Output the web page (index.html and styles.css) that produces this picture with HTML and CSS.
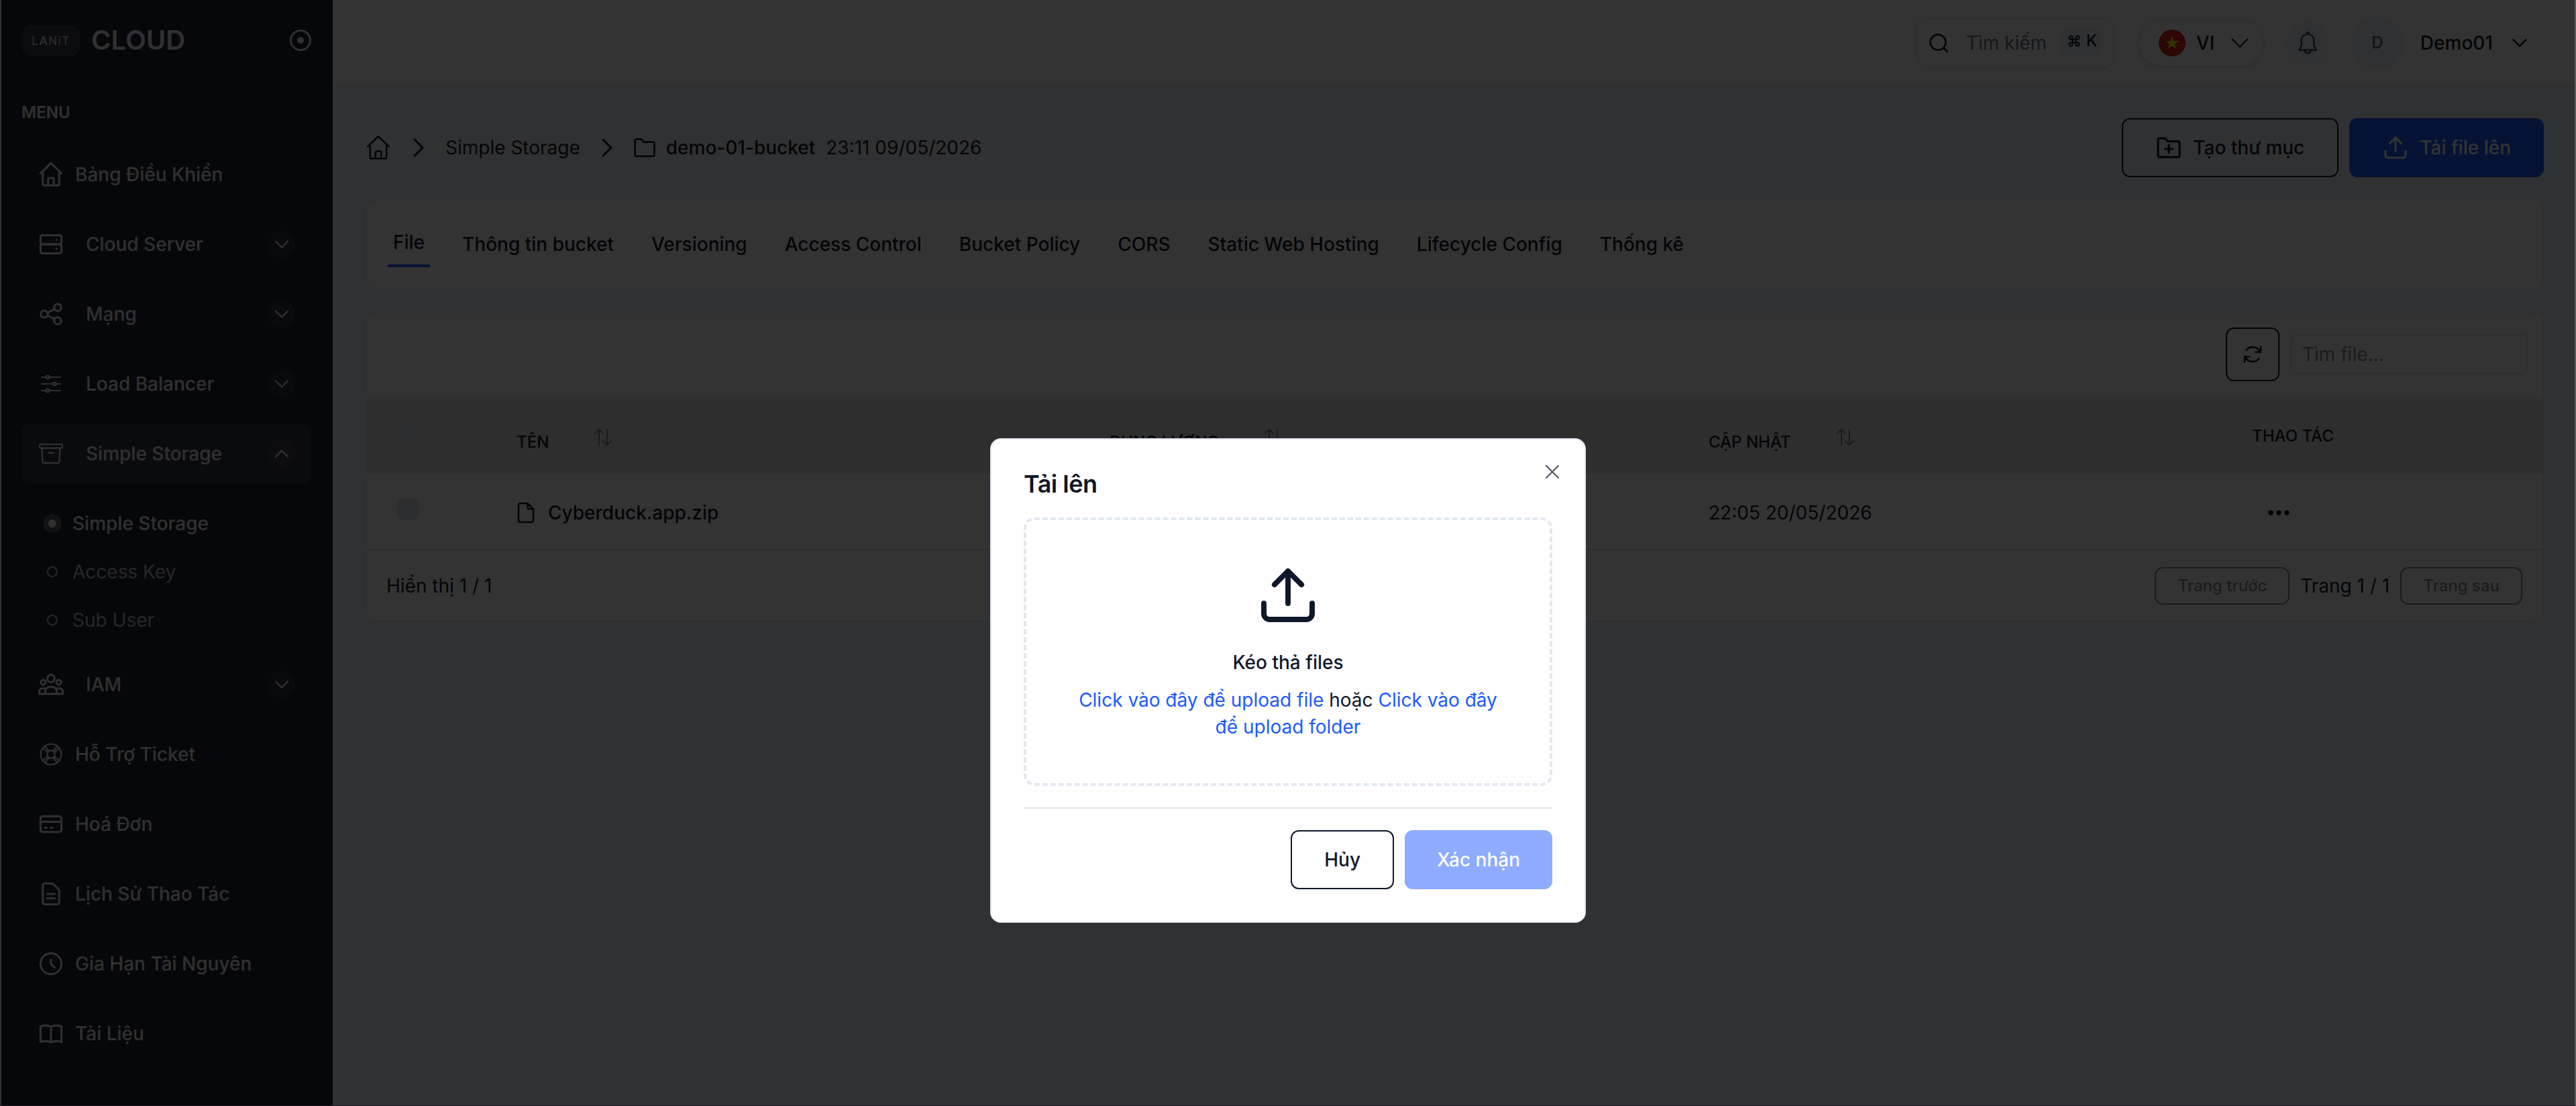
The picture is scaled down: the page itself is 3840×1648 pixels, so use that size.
FILE: index.html
```
<!DOCTYPE html>
<html lang="vi">
<head>
    <meta charset="UTF-8">
    <meta name="viewport" content="width=device-width, initial-scale=1.0">
    <title>Simple Storage</title>
    <link rel="stylesheet" href="styles.css">
</head>
<body>
    <svg class="sprite">
        <symbol id="home" viewBox="0 0 20 20"><path d="M2.1 9.2 10 1.6l7.9 7.6M3.9 8v9.2c0 .5.4.9.9.9h10.4c.5 0 .9-.4.9-.9V8M7.9 18v-4.400c0-.6.4-1 1-1h2.200c.6 0 1 .4 1 1V18"/></symbol>
        <symbol id="chevron" viewBox="0 0 20 20"><path d="m4 7 6 6 6-6"/></symbol>
        <symbol id="folder" viewBox="0 0 20 20"><path d="M2 16V4.200C2 3.500 2.500 3 3.200 3h3.600c.5 0 .9.200 1.100.6L9 5.300h7.800c.700 0 1.200.5 1.200 1.200V16c0 .6-.5 1.100-1.200 1.100H3.200C2.500 17.100 2 16.600 2 16z"/></symbol>
        <symbol id="upload" viewBox="0 0 20 20"><path d="M2.500 12.500v3.300c0 .9.800 1.700 1.700 1.700h11.600c.9 0 1.700-.8 1.700-1.700v-3.300M10 12.500v-10M5.800 6.700 10 2.500l4.200 4.200"/></symbol>
        <symbol id="sort" viewBox="0 0 28 28"><path d="M8 26V3M2 9l6-6 6 6M20 3v23M14 20l6 6 6-6"/></symbol>
    </svg>

    <div class="app">
        <aside class="sidebar">
            <div class="brand">
                <div class="brand-logo">L<span class="logo-a">A</span>NiT</div>
                <div class="brand-name">CLOUD</div>
                <svg class="brand-toggle" viewBox="0 0 32 32"><circle cx="16" cy="16" r="14.500"/><circle class="dot" cx="16" cy="16" r="5"/></svg>
            </div>
            <h3 class="menu-title">MENU</h3>
            <nav class="menu">
                <a class="item"><svg class="icon"><use href="#home"/></svg><span>Bảng Điều Khiển</span></a>
                <a class="item parent">
                    <svg class="icon" viewBox="0 0 20 20"><rect x="2.200" y="3.200" width="15.600" height="6.800" rx="1.500"/><rect x="2.200" y="10" width="15.600" height="6.800" rx="1.500"/><path d="M14 6.600h.1M14 13.400h.1"/></svg>
                    <span>Cloud Server</span><i class="toggle"><svg><use href="#chevron"/></svg></i>
                </a>
                <a class="item parent">
                    <svg class="icon" viewBox="0 0 20 20"><circle cx="5" cy="10" r="2.600"/><circle cx="15" cy="5" r="2.600"/><circle cx="15" cy="15" r="2.600"/><path d="m7.400 9 5.200-2.700M7.400 11l5.200 2.700"/></svg>
                    <span>Mạng</span><i class="toggle"><svg><use href="#chevron"/></svg></i>
                </a>
                <a class="item parent">
                    <svg class="icon thin" viewBox="0 0 20 20"><path d="M3 5h3.700M8.700 5H17M3 10h8.700M13.700 10H17M3 15h3.700M8.700 15H17"/><circle cx="7.600" cy="5" r="1.200"/><circle cx="12.600" cy="10" r="1.200"/><circle cx="7.600" cy="15" r="1.200"/></svg>
                    <span>Load Balancer</span><i class="toggle"><svg><use href="#chevron"/></svg></i>
                </a>
                <a class="item parent active">
                    <svg class="icon thin" viewBox="0 0 20 20"><rect x="1.600" y="3" width="16.800" height="2.800" rx=".6"/><path d="M3.300 5.900 3.700 15.600c0 .8.700 1.300 1.400 1.300h9.800c.7 0 1.400-.5 1.400-1.300l.4-9.700M8.200 9.400h3.600"/></svg>
                    <span>Simple Storage</span><i class="toggle up"><svg><use href="#chevron"/></svg></i>
                </a>
                <div class="submenu">
                    <a class="sub current"><i></i>Simple Storage</a>
                    <a class="sub"><i></i>Access Key</a>
                    <a class="sub"><i></i>Sub User</a>
                </div>
                <a class="item parent">
                    <svg class="icon" viewBox="0 0 20 20"><circle cx="10" cy="5.500" r="2.700"/><circle cx="4.200" cy="8.300" r="1.800"/><circle cx="15.800" cy="8.300" r="1.800"/><path d="M5.700 17v-2c0-2 1.800-3.400 4.300-3.400s4.300 1.400 4.300 3.400v2M1.300 17v-2c0-1.300 1.200-2.200 2.900-2.200.8 0 1.500.2 2 .5M18.700 17v-2c0-1.300-1.200-2.200-2.900-2.200-.8 0-1.500.2-2 .5M1.300 17h17.400"/></svg>
                    <span>IAM</span><i class="toggle"><svg><use href="#chevron"/></svg></i>
                </a>
                <a class="item">
                    <svg class="icon thin" viewBox="0 0 20 20"><circle cx="10" cy="10" r="7.700"/><circle cx="10" cy="10" r="2.900"/><path d="m3.900 5.500 3.600 2.800M5.500 3.900l2.800 3.600M16.100 5.500l-3.600 2.800M14.500 3.900l-2.800 3.600M3.900 14.500l3.600-2.800M5.500 16.100l2.800-3.600M16.100 14.500l-3.600-2.800M14.500 16.100l-2.800-3.600"/></svg>
                    <span>Hỗ Trợ Ticket</span>
                </a>
                <a class="item">
                    <svg class="icon" viewBox="0 0 20 20"><rect x="2.200" y="4.100" width="15.600" height="11.800" rx="1.800"/><path d="M2.200 8.200h15.600M5.700 12.600h1.100M9.700 12.600h1.200"/></svg>
                    <span>Hoá Đơn</span>
                </a>
                <a class="item">
                    <svg class="icon" viewBox="0 0 20 20"><path d="M16.100 7v9.300c0 .9-.7 1.500-1.500 1.500H5.400c-.8 0-1.500-.6-1.500-1.500V3.700c0-.9.700-1.500 1.500-1.500h5.800zM7.200 10h5.600M7.200 13.200h5.600"/></svg>
                    <span>Lịch Sử Thao Tác</span>
                </a>
                <a class="item">
                    <svg class="icon" viewBox="0 0 20 20"><circle cx="10" cy="10" r="7.800"/><path d="M10 7v3.200l2.700 2.600"/></svg>
                    <span>Gia Hạn Tài Nguyên</span>
                </a>
                <a class="item">
                    <svg class="icon" viewBox="0 0 20 20"><path d="M10 5c-2-1.100-5.300-1.100-7.800-.3v11.600c2.500-.8 5.800-.8 7.800.3 2-1.100 5.300-1.100 7.800-.3V4.700C15.300 3.900 12 3.900 10 5v11.400"/></svg>
                    <span>Tài Liệu</span>
                </a>
            </nav>
        </aside>

        <div class="page">
            <header class="topbar">
                <div class="search">
                    <svg viewBox="0 0 32 32"><circle cx="15" cy="15" r="11.500"/><path d="m23.500 23.500 5.500 5.500"/></svg>
                    <span>Tìm kiếm</span>
                    <kbd><svg class="cmd" viewBox="0 0 24 24"><path d="M9 9h6v6H9zM9 9H6a3 3 0 1 1 3-3zM15 9V6a3 3 0 1 1 3 3zM15 15h3a3 3 0 1 1-3 3zM9 15v3a3 3 0 1 1-3-3z"/></svg>K</kbd>
                </div>
                <div class="lang">
                    <svg class="flag" viewBox="0 0 40 40"><circle cx="20" cy="20" r="20" fill="#da251d"/><path fill="#ff0" d="m20 9.500 2.400 7.400h7.700l-6.300 4.500 2.400 7.400-6.200-4.600-6.200 4.600 2.400-7.400-6.300-4.500h7.700z"/></svg>
                    <span>VI</span>
                    <svg class="caret"><use href="#chevron"/></svg>
                </div>
                <div class="bell">
                    <svg viewBox="0 0 36 36"><path d="M18 2.200c.9 0 1.500.7 1.500 1.600v1.100c4.600.7 7.700 4.400 7.700 8.900v8.400l3.300 5.200c.3.500 0 1.100-.6 1.100H6.100c-.6 0-.9-.6-.6-1.100l3.300-5.200v-8.400c0-4.500 3.100-8.200 7.700-8.900V3.800c0-.9.600-1.600 1.500-1.600zM13.500 28.700c.3 2.800 2 4.600 4.500 4.600s4.200-1.800 4.500-4.600"/></svg>
                </div>
                <div class="avatar">D</div>
                <div class="user">Demo01</div>
                <svg class="user-caret"><use href="#chevron"/></svg>
            </header>

            <main class="content">
                <div class="heading">
                    <div class="breadcrumb">
                        <svg class="crumb-home"><use href="#home"/></svg>
                        <svg class="sep"><use href="#chevron"/></svg>
                        <span>Simple Storage</span>
                        <svg class="sep"><use href="#chevron"/></svg>
                        <svg class="crumb-folder"><use href="#folder"/></svg>
                        <b>demo-01-bucket</b>
                        <span>23:11 09/05/2026</span>
                    </div>
                    <div class="actions">
                        <button class="btn outline"><svg viewBox="0 0 20 20"><use href="#folder"/><path d="M10 8.200v5.600M7.200 11h5.600"/></svg>Tạo thư mục</button>
                        <button class="btn primary"><svg><use href="#upload"/></svg>Tải file lên</button>
                    </div>
                </div>

                <div class="tabs">
                    <a class="tab selected">File</a>
                    <a class="tab">Thông tin bucket</a>
                    <a class="tab">Versioning</a>
                    <a class="tab">Access Control</a>
                    <a class="tab">Bucket Policy</a>
                    <a class="tab">CORS</a>
                    <a class="tab">Static Web Hosting</a>
                    <a class="tab">Lifecycle Config</a>
                    <a class="tab">Thống kê</a>
                </div>

                <section class="card">
                    <div class="toolbar">
                        <button class="refresh"><svg viewBox="0 0 28 28"><path d="M25.500 11.500A12 12 0 0 0 4.500 8M2.500 16.500a12 12 0 0 0 21 3.500M26 2.500v8h-7.500M2 25.500v-8h7.500"/></svg></button>
                        <input class="filter" type="text" placeholder="Tìm file...">
                    </div>
                    <div class="row head">
                        <i class="check"></i>
                        <div class="cell">TÊN<svg class="sort"><use href="#sort"/></svg></div>
                        <div class="cell">DUNG LƯỢNG<svg class="sort"><use href="#sort"/></svg></div>
                        <div class="cell">CẬP NHẬT<svg class="sort"><use href="#sort"/></svg></div>
                        <div class="cell ops">THAO TÁC</div>
                    </div>
                    <div class="row">
                        <i class="check"></i>
                        <div class="cell name"><svg viewBox="0 0 28 32"><path d="M16.500 2H5.200C4 2 3 3 3 4.200v23.600C3 29 4 30 5.200 30h17.600c1.200 0 2.200-1 2.200-2.200V10.500zM16.500 2v6.300c0 1.200 1 2.200 2.200 2.200H25"/></svg>Cyberduck.app.zip</div>
                        <div class="cell"></div>
                        <div class="cell">22:05 20/05/2026</div>
                        <div class="cell dots"><svg viewBox="0 0 32 8"><circle cx="4" cy="4" r="3.700"/><circle cx="16" cy="4" r="3.700"/><circle cx="28" cy="4" r="3.700"/></svg></div>
                    </div>
                    <div class="pager">
                        <span class="total">Hiển thị 1 / 1</span>
                        <button disabled>Trang trước</button>
                        <span>Trang 1 / 1</span>
                        <button disabled>Trang sau</button>
                    </div>
                </section>
            </main>
        </div>
    </div>

    <div class="overlay">
        <div class="modal">
            <svg class="close" viewBox="0 0 20 20"><path d="m1 1 18 18M19 1 1 19"/></svg>
            <h2>Tải lên</h2>
            <div class="dropzone">
                <svg><use href="#upload"/></svg>
                <p class="drop-title">Kéo thả files</p>
                <p class="drop-text"><a>Click vào đây để upload file</a> hoặc <a>Click vào đây</a><br><a>để upload folder</a></p>
            </div>
            <div class="modal-footer">
                <button class="btn outline">Hủy</button>
                <button class="btn primary" disabled>Xác nhận</button>
            </div>
        </div>
    </div>
</body>
</html>
```
FILE: styles.css
```
* { box-sizing: border-box; margin: 0; padding: 0; }
body { width: 3840px; height: 1648px; overflow: hidden; font-family: Inter, sans-serif; font-size: 28px; line-height: 40px; color: #0f172a; background: #f1f5f9; }
svg { fill: none; stroke: currentColor; stroke-width: 1.5; stroke-linecap: round; stroke-linejoin: round; flex: none; }
button, input { font: inherit; color: inherit; background: none; }
i { font-style: normal; }
.sprite { display: none; }
.app { display: flex; width: 3838px; height: 1648px; border-left: 2px solid #fff; }

/* sidebar */
.sidebar { width: 494px; flex: none; padding: 37px 32px 0 30px; background: #1c2434; color: #f1f1f1; }
.brand { display: flex; align-items: center; height: 47px; }
.brand-logo { width: 88px; height: 47px; line-height: 48px; text-align: center; border-radius: 16px; background: #373f49; font-size: 17px; letter-spacing: 1.5px; color: #ddd; box-shadow: 0 4px 8px rgba(0, 0, 0, .4); }
.logo-a { font-weight: 600; }
.brand-name { margin-left: 16px; padding-bottom: 2px; font-size: 40px; font-weight: 600; }
.brand-toggle { width: 32px; height: 32px; margin: 0 0 1px auto; stroke-width: 3; }
.brand-toggle .dot { fill: currentColor; stroke: none; }
.menu-title { margin: 64px 0 28px; font-size: 24px; font-weight: 600; }
.menu { display: flex; flex-direction: column; gap: 16px; }
.item { display: flex; align-items: center; gap: 16px; height: 88px; padding: 0 24px; border-radius: 12px; font-weight: 500; }
.item.parent { gap: 32px; }
.item.active { background: #333a48; }
.icon { width: 40px; height: 40px; }
.icon.thin { stroke-width: 1.1; }
.toggle { display: flex; align-items: center; justify-content: center; width: 40px; height: 40px; margin-left: auto; border-radius: 50%; background: #2e3543; }
.item.active .toggle { background: #40444f; }
.toggle svg { width: 30px; height: 30px; }
.toggle.up svg { transform: rotate(180deg); }
.submenu { padding-top: 8px; }
.sub { display: flex; align-items: center; height: 72px; padding-left: 32px; gap: 16px; color: #c0c4ca; }
.sub i { width: 16px; height: 16px; margin: 0 6px; border: 2px solid #c0c4ca; border-radius: 50%; }
.sub.current { color: #f1f1f1; font-weight: 500; }
.sub.current i { width: 28px; height: 28px; margin: 0; border: 8px solid #555a64; background: #f1f1f1; }

/* top bar */
.page { flex: 1; min-width: 0; }
.topbar { display: flex; align-items: center; justify-content: flex-end; height: 129px; padding-right: 66px; background: #fff; border-bottom: 2px solid #e2e8f0; }
.search { display: flex; align-items: center; width: 296px; height: 76px; padding: 0 16px; border: 2px solid #e2e8f0; border-radius: 16px; color: #64748b; }
.search > svg { width: 32px; height: 32px; margin-right: 25px; color: #0f172a; stroke-width: 2.5; }
kbd { display: flex; align-items: center; gap: 8px; width: 60px; height: 42px; margin-left: auto; padding: 0 8px 6px; border-radius: 8px; background: #f1f5f9; font: 500 24px Inter, sans-serif; color: #0f172a; }
.cmd { width: 20px; height: 20px; stroke-width: 2.4; }
.lang { display: flex; align-items: center; width: 190px; height: 72px; margin-left: 34px; padding: 0 16px 0 30px; border: 2px solid #e2e8f0; border-radius: 36px; font-weight: 500; box-shadow: 0 2px 4px rgba(0, 0, 0, .1); }
.flag { width: 40px; height: 40px; margin-right: 16px; stroke: none; }
.caret { width: 38px; height: 38px; margin-left: auto; stroke-width: 1.2; }
.bell { display: flex; align-items: center; justify-content: center; width: 64px; height: 64px; margin-left: 32px; border-radius: 50%; background: #eff4fb; color: #64748b; }
.bell svg { width: 36px; height: 36px; color: #334155; stroke-width: 2.5; }
.avatar { width: 80px; height: 80px; line-height: 80px; margin: 0 24px 0 32px; border-radius: 50%; background: #f1f5f9; color: #475569; font-size: 24px; font-weight: 500; text-align: center; }
.user { font-weight: 500; }
.user-caret { width: 32px; height: 32px; margin-left: 24px; stroke-width: 1.5; }

/* content */
.content { padding: 47px 46px 0 48px; }
.heading { display: flex; justify-content: space-between; align-items: center; height: 88px; margin-bottom: 32px; }
.breadcrumb { display: flex; align-items: center; white-space: pre; }
.breadcrumb b { margin: 0 16px; font-weight: 500; }
.crumb-home { width: 40px; height: 40px; stroke-width: 1.3; }
.sep { width: 40px; height: 40px; margin: 0 20px; stroke-width: 1.5; transform: rotate(-90deg); }
.crumb-folder { width: 36px; height: 36px; margin: 0 -2px; }
.actions { display: flex; gap: 16px; }
.btn { display: inline-flex; align-items: center; justify-content: center; gap: 16px; height: 88px; padding: 0 49px 0 48px; border: 2px solid #0f172a; border-radius: 12px; font-weight: 500; }
.btn svg { width: 40px; height: 40px; stroke-width: 1.6; }
.btn.primary { padding: 0 47px; border-color: #205aff; background: #205aff; color: #fff; }
.btn:disabled { opacity: .5; }
.tabs { display: flex; align-items: center; gap: 44px; height: 136px; padding: 0 32px; border: 2px solid #e2e8f0; border-radius: 16px; background: #fff; font-weight: 500; }
.tab { padding: 0 6px; }
.tab.selected { height: 68px; line-height: 62px; margin-right: -2px; padding: 0 8px; border-bottom: 4px solid #205aff; }

/* file table */
.card { margin-top: 32px; height: 462px; border: 2px solid #e2e8f0; border-radius: 16px; background: #fff; overflow: hidden; }
.toolbar { display: flex; align-items: center; justify-content: flex-end; gap: 16px; height: 128px; padding: 0 22px 2px 0; border-bottom: 2px solid #e2e8f0; }
.refresh { display: flex; align-items: center; justify-content: center; width: 80px; height: 80px; border: 2px solid #0f172a; border-radius: 12px; }
.refresh svg { width: 28px; height: 28px; stroke-width: 2.6; }
.filter { width: 354px; height: 60px; padding: 0 16px; border: 2px solid #e2e8f0; border-radius: 8px; }
.filter::placeholder { color: #808a9a; opacity: 1; }
.row { display: grid; grid-template-columns: 178px 884px 893px 653px 1fr; align-items: center; height: 114px; padding-left: 46px; border-bottom: 2px solid #e4e6ea; }
.row.head { height: 110px; margin-top: 2px; border: 0; background: #e6e6e6; font-size: 24px; font-weight: 500; }
.check { width: 32px; height: 32px; margin-bottom: 6px; border-radius: 8px; background: #d9dee4; }
.head .check { margin-bottom: 10px; background: #dde1e6; }
.cell { display: flex; align-items: center; height: 40px; margin-top: 4px; }
.head .cell { margin-top: 15px; }
.head .ops { margin-top: -2px; padding-left: 157px; }
.sort { width: 28px; height: 28px; margin: -15px 0 0 67px; color: #808693; stroke-width: 2; }
.name { gap: 19px; font-weight: 500; }
.name svg { width: 28px; height: 32px; stroke-width: 2.5; }
.dots { padding-left: 181px; }
.dots svg { width: 32px; height: 8px; fill: currentColor; stroke: none; }
.pager { display: flex; align-items: center; justify-content: flex-end; gap: 16px; height: 106px; padding: 0 30px; }
.pager .total { margin-right: auto; }
.pager button { height: 56px; padding: 0 32px; border: 2px solid #0f172a; border-radius: 12px; font-size: 24px; font-weight: 500; opacity: .5; }

/* upload modal */
.overlay { position: fixed; inset: 0; display: flex; justify-content: center; align-items: flex-start; padding: 653px 0 0 2px; background: rgba(0, 0, 0, .8); border-right: 2px solid #5a5a5a; border-bottom: 1px solid #1f1a24; }
.modal { position: relative; width: 888px; height: 722px; padding: 48px; border: 2px solid #e2e8f0; border-radius: 16px; background: #fff; }
.close { position: absolute; top: 38px; right: 38px; width: 20px; height: 20px; color: #525866; stroke-width: 2.2; }
.modal h2 { font-size: 36px; line-height: 36px; font-weight: 600; letter-spacing: -.5px; }
.dropzone { display: flex; flex-direction: column; align-items: center; height: 400px; margin: 32px 0; padding: 64px 60px; border: 4px dashed #e2e8f0; border-radius: 16px; text-align: center; }
.dropzone svg { width: 96px; height: 96px; stroke-width: 1.65; }
.drop-title { margin: 32px 0 16px; font-weight: 500; }
.drop-text a { color: #205aff; }
.modal-footer { display: flex; justify-content: flex-end; gap: 16px; padding-top: 32px; border-top: 2px solid #e2e8f0; }
.modal-footer .btn { padding: 0 46px; }
.modal-footer .outline { padding: 0 48px; }
```
